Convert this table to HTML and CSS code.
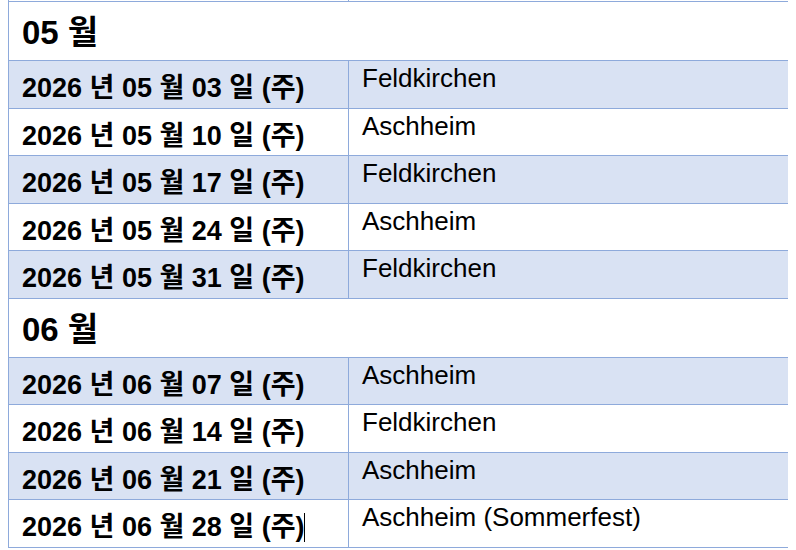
FILE: index.html
```html
<!DOCTYPE html>
<html lang="ko">
<head>
<meta charset="utf-8">
<title>일정</title>
<link rel="stylesheet" href="styles.css">
</head>
<body>
<table class="sched">
  <colgroup><col class="c-date"><col class="c-place"></colgroup>
  <tbody>
    <tr class="day prev"><td class="date"></td><td class="place"></td></tr>
    <tr class="month"><td colspan="2">05 월</td></tr>
    <tr class="day shade"><td class="date">2026 년 05 월 03 일 (주)</td><td class="place">Feldkirchen</td></tr>
    <tr class="day"><td class="date">2026 년 05 월 10 일 (주)</td><td class="place">Aschheim</td></tr>
    <tr class="day shade"><td class="date">2026 년 05 월 17 일 (주)</td><td class="place">Feldkirchen</td></tr>
    <tr class="day"><td class="date">2026 년 05 월 24 일 (주)</td><td class="place">Aschheim</td></tr>
    <tr class="day shade"><td class="date">2026 년 05 월 31 일 (주)</td><td class="place">Feldkirchen</td></tr>
    <tr class="month"><td colspan="2">06 월</td></tr>
    <tr class="day shade"><td class="date">2026 년 06 월 07 일 (주)</td><td class="place">Aschheim</td></tr>
    <tr class="day"><td class="date">2026 년 06 월 14 일 (주)</td><td class="place">Feldkirchen</td></tr>
    <tr class="day shade"><td class="date">2026 년 06 월 21 일 (주)</td><td class="place">Aschheim</td></tr>
    <tr class="day"><td class="date">2026 년 06 월 28 일 (주)<span class="caret"></span></td><td class="place">Aschheim (Sommerfest)</td></tr>
  </tbody>
</table>
</body>
</html>
```
FILE: styles.css
```css
html, body {
  background: #ffffff;
}
body {
  margin: 0 8px;
  font-family: "Liberation Sans", "Noto Sans CJK KR", sans-serif;
  color: #000;
}
.sched {
  border-collapse: collapse;
  table-layout: fixed;
  width: 783px;
  margin-top: -46.5px;
}
.c-date { width: 340px; }
.c-place { width: 443px; }
.sched td {
  border: 1px solid #8eaadb;
  padding: 0;
  vertical-align: top;
  white-space: nowrap;
}
.day td {
  height: 47.5px;
  box-sizing: border-box;
}
.shade td {
  background: #d9e2f3;
}
.month td {
  height: 59px;
  box-sizing: border-box;
  font-size: 33px;
  font-weight: bold;
  line-height: 37px;
  padding: 12px 13px 0;
}
.date {
  font-size: 27px;
  font-weight: bold;
  line-height: 30px;
  padding: 12px 13px 0 !important;
}
.place {
  font-size: 26px;
  line-height: 30px;
  padding: 2px 13px 0 !important;
}
.caret {
  display: inline-block;
  width: 1px;
  height: 29px;
  background: #000;
  vertical-align: -6px;
}
```
